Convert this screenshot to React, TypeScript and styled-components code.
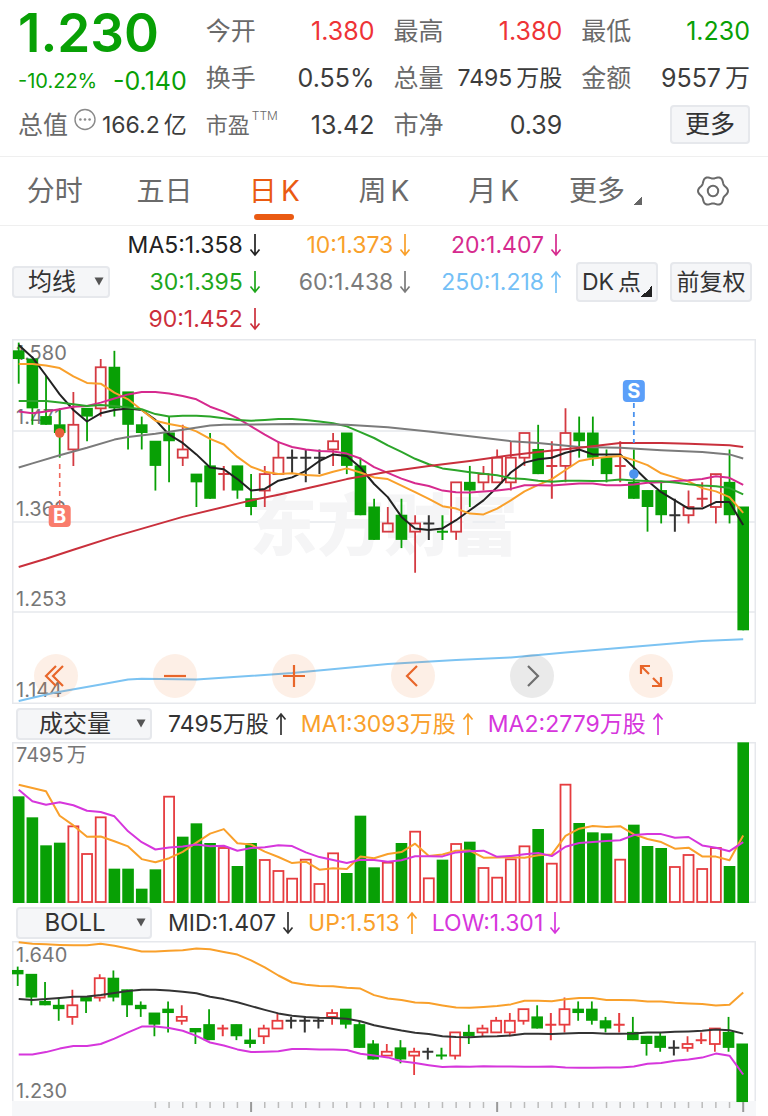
import React from 'react';
import styled, { createGlobalStyle } from 'styled-components';

const GREEN = '#08a005';
const RED = '#d43a42';
const ORANGE = '#f9a02b';
const MAGENTA = '#d62a8e';
const VIOLET = '#d636dc';
const ACCENT = '#ea5a12';

const Global = createGlobalStyle`
  * { box-sizing: border-box; }
  body {
    margin: 0;
    background: #fff;
    color: #333;
    font-family: Inter, "Noto Sans CJK SC", sans-serif;
  }
  button, select { font-family: inherit; color: inherit; margin: 0; }
`;

/* ---------- data ---------- */

type Candle = [open: number, close: number, high: number, low: number];

// Prices in cents.
const candles: Candle[] = [
  [157, 156, 158, 153], [156, 150, 156, 148], [149, 148, 154, 148], [148, 147, 150, 144],
  [145, 148, 152, 143], [150, 149, 150, 146], [150, 155, 156, 149], [155, 150, 157, 149],
  [152, 148, 152, 145], [148, 147, 149, 145], [146, 143, 146, 140], [147, 146, 149, 141],
  [144, 145, 148, 143], [142, 141, 142, 138], [143, 139, 147, 139], [142, 142, 143, 140],
  [143, 140, 143, 139], [139, 138, 142, 137], [140, 142, 143, 138], [142, 144, 146, 142],
  [144, 144, 145, 142], [144, 144, 145, 141], [144, 144, 145, 142], [145, 146, 147, 143],
  [147, 143, 147, 142], [143, 137, 144, 137], [138, 134, 139, 134], [135, 136, 138, 135],
  [137, 134, 139, 133], [135, 136, 137, 130], [136, 136, 137, 134], [135, 135, 137, 134],
  [135, 141, 141, 134], [141, 140, 143, 138], [141, 142, 143, 140], [141, 144, 145, 141],
  [141, 144, 146, 140], [144, 147, 147, 143], [145, 142, 148, 142], [143, 143, 146, 139],
  [143, 147, 150, 141], [147, 146, 149, 144], [147, 144, 149, 143], [144, 142, 145, 141],
  [143, 143, 146, 141], [141, 139, 145, 139], [140, 138, 140, 135], [140, 137, 141, 136],
  [137, 137, 139, 135], [137, 138, 140, 136], [139, 139, 141, 138], [138, 142, 142, 136],
  [141, 137, 145, 136], [138, 123, 138, 123],
];

// Volumes on a scale where 482 fills the chart (7495万).
const volumes = [
  320, 257, 173, 181, 233, 150, 260, 103, 103, 43, 101, 322, 199, 239, 180, 168, 111, 180,
  132, 99, 76, 133, 60, 152, 90, 262, 107, 124, 180, 217, 77, 130, 180, 184, 108, 79, 134,
  173, 222, 121, 358, 240, 212, 209, 133, 235, 171, 165, 111, 147, 105, 168, 111, 482,
];

const closes = candles.map((c) => c[1]);

// Moving average; the first entries reach back before the window and are given.
const average = (src: number[], n: number, head: number[]) =>
  src.map((_, i) =>
    i < n - 1 ? head[i] : src.slice(i - n + 1, i + 1).reduce((a, b) => a + b, 0) / n,
  );

const ma5 = average(closes, 5, [157.7, 156.2, 154, 151.7]);
const ma10 = average(closes, 10, [155.4, 155.4, 155.2, 154.9, 153.9, 153.1, 153, 151.9, 151.1]);
const ma20 = average(closes, 20, [
  149.6, 149.4, 149.6, 149.9, 150.2, 150.3, 150.7, 151.2, 151.7, 152, 152, 151.8, 151.5, 151.1,
  150.2, 149.6, 148.8, 147.8, 146.8,
]);
const ma30 = average(closes, 30, [
  150.9, 150.9, 150.9, 150.7, 150.5, 150.3, 150.4, 150.3, 150.1, 149.9, 149.3, 149, 149.1, 149.1,
  149, 148.8, 148.6, 148.5, 148.6, 148.7, 148.7, 148.6, 148.4, 148.2, 147.8, 147.1, 146.4, 145.5,
  144.7,
]);
const vol5 = average(volumes, 5, [355, 345, 335, 262]);
const vol10 = average(volumes, 10, [340, 305, 295, 302, 293, 277, 273, 260, 215]);

const upperHead = [
  164.3, 163.9, 163.8, 163.6, 163.5, 163.5, 163.9, 163.4, 162.7, 161.9, 161.9, 162.1, 162.2,
  162.7, 162.5, 161.8, 161.1, 159.6, 157.8,
];
const lowerHead = [
  135.3, 135.3, 135.9, 136.8, 137.5, 137.5, 138, 139.4, 141, 142.5, 142.5, 142.1, 141.4, 140.1,
  138.4, 137.6, 136.6, 135.9, 136,
];
const band = (i: number) => {
  const part = closes.slice(i - 19, i + 1);
  return 2 * Math.sqrt(part.reduce((a, c) => a + (c - ma20[i]) ** 2, 0) / 19);
};
const upper = closes.map((_, i) => (i < 19 ? upperHead[i] : ma20[i] + band(i)));
const lower = closes.map((_, i) => (i < 19 ? lowerHead[i] : ma20[i] - band(i)));

type Point = [index: number, value: number];
const ma60: Point[] = [
  [0, 142.8], [1, 143.3], [3, 144.3], [5, 145.2], [7, 146.2], [8, 146.5], [10, 146.9],
  [12, 147.4], [14, 147.9], [15, 148], [20, 148.1], [24, 148], [27, 147.7], [30, 147.2],
  [33, 146.6], [36, 146], [38, 145.8], [41, 145.3], [44, 145.2], [47, 144.9], [50, 144.7],
  [52, 144.4], [53, 143.9],
];
const ma90: Point[] = [
  [0, 130.7], [2, 131.7], [4, 132.8], [7, 134.4], [12, 136.8], [17, 138.8], [19, 139.5],
  [22, 140.6], [24, 141.4], [27, 142.3], [30, 143], [33, 143.6], [36, 144.3], [38, 144.7],
  [41, 145.2], [44, 145.8], [47, 145.8], [49, 145.7], [52, 145.5], [53, 145.3],
];
const ma250: Point[] = [
  [0, 114.4], [2.6, 115.4], [6, 116.4], [8, 117], [9, 117.1], [13, 117], [20, 117.8],
  [27, 118.9], [32, 119.4], [36, 119.7], [40, 120.3], [45, 121], [50, 121.7], [53, 121.9],
];

/* ---------- chart helpers ---------- */

const STEP = 13.67;
const px = (i: number) => 6.7 + STEP * i;
const priceY = (k: number) => 168 + (138 - k) * 8.22;
const bollY = (k: number) => 103 + (138 - k) * 3.87;
const volY = (v: number) => 161 - v / 3;

const indexed = (values: number[]): Point[] => values.map((v, i) => [i, v]);

function Line({ points, y, color }: { points: Point[]; y: (v: number) => number; color: string }) {
  return (
    <polyline
      points={points.map(([i, v]) => `${px(i).toFixed(1)},${y(v).toFixed(1)}`).join(' ')}
      fill="none"
      stroke={color}
      strokeWidth="2"
      strokeLinejoin="round"
    />
  );
}

function Candles({ y, shift = 0, red }: { y: (v: number) => number; shift?: number; red: string }) {
  return (
    <>
      {candles.map(([open, close, high, low], i) => {
        const x = px(i) + shift;
        const prev = i ? closes[i - 1] : 999;
        const top = y(Math.max(open, close));
        const bottom = y(Math.min(open, close));
        if (open === close) {
          const color = close > prev ? red : close < prev ? GREEN : '#333';
          return (
            <path
              key={i}
              d={`M${x} ${y(high)}V${y(low)}M${x - 5.5} ${top}h11`}
              stroke={color}
              strokeWidth="2"
            />
          );
        }
        if (close > open) {
          return (
            <g key={i} fill="none" stroke={red} strokeWidth="1.8">
              <path d={`M${x} ${y(high)}V${top}M${x} ${bottom}V${y(low)}`} />
              <rect x={x - 5} y={top} width="10" height={bottom - top} />
            </g>
          );
        }
        return (
          <g key={i} fill={GREEN}>
            <path d={`M${x} ${y(high)}V${y(low)}`} stroke={GREEN} strokeWidth="1.8" />
            <rect x={x - 5.8} y={top - 0.5} width="11.6" height={bottom - top + 0.5} />
          </g>
        );
      })}
    </>
  );
}

/* ---------- styled parts ---------- */

const Page = styled.main`
  width: 100%;
`;

const Quote = styled.section`
  display: grid;
  grid-template-columns: repeat(4, minmax(0, 1fr));
  column-gap: 19px;
  padding: 7px 18px 8px;
  border-bottom: 1px solid #efefef;
`;

const QuoteColumn = styled.div`
  display: grid;
  grid-template-rows: repeat(3, 47px);
`;

const QuoteRow = styled.div`
  display: flex;
  align-items: center;
  justify-content: space-between;
  white-space: nowrap;
`;

const PriceRow = styled(QuoteRow)`
  padding-top: 6px;
`;

const Price = styled.strong`
  font-size: 53px;
  line-height: 41px;
  font-weight: 600;
  color: ${GREEN};
`;

const Label = styled.span`
  font-size: 25px;
  line-height: 36px;
  color: #6a6a6a;
`;

const SmallLabel = styled(Label)`
  font-size: 22px;
`;

const Sup = styled.sup`
  font-size: 12px;
  line-height: 12px;
  vertical-align: 13px;
  margin-left: 2px;
  font-weight: 300;
`;

const Value = styled.span<{ $color?: string; $size?: number }>`
  font-size: ${(p) => p.$size ?? 25}px;
  line-height: 36px;
  color: ${(p) => p.$color ?? '#3c3c3c'};
`;

const Spaced = styled.span`
  margin-left: 4px;
`;

const Change = styled(QuoteRow)`
  padding-top: 6px;
`;

const MoreButton = styled.button`
  width: 80px;
  height: 39px;
  margin-left: auto;
  padding: 0;
  border: 2px solid #e6e8ec;
  border-radius: 4px;
  background: #f5f6f8;
  font-size: 25px;
  line-height: 33px;
`;

const Tabs = styled.nav`
  display: grid;
  grid-template-columns: repeat(7, minmax(0, 1fr));
  height: 69px;
  border-bottom: 1px solid #efefef;
`;

const Tab = styled.button<{ $active?: boolean }>`
  position: relative;
  display: flex;
  align-items: center;
  justify-content: center;
  padding: 0;
  border: 0;
  background: none;
  font-size: 28px;
  line-height: 40px;
  color: ${(p) => (p.$active ? ACCENT : '#6a6a6a')};
  white-space: nowrap;

  &::after {
    content: '';
    display: ${(p) => (p.$active ? 'block' : 'none')};
    position: absolute;
    bottom: 5px;
    width: 40px;
    height: 6px;
    border-radius: 3px;
    background: ${ACCENT};
  }
`;

const Corner = styled.i<{ $size: number; $color: string }>`
  width: ${(p) => p.$size}px;
  height: ${(p) => p.$size}px;
  align-self: flex-end;
  background: linear-gradient(135deg, transparent 50%, ${(p) => p.$color} 50%);
`;

const TabCorner = styled(Corner)`
  margin: 0 -4px 20px 8px;
`;

const Averages = styled.section`
  display: flex;
  align-items: center;
  padding: 0 16px 2px 12px;
`;

const Legend = styled.div`
  flex: 1;
  display: grid;
  grid-template-columns: repeat(3, minmax(0, 1fr));
  grid-auto-rows: 37px;
  align-items: center;
  justify-items: end;
`;

const Reading = styled.span<{ $color: string }>`
  display: inline-flex;
  align-items: center;
  gap: 6px;
  font-size: 23px;
  line-height: 32px;
  color: ${(p) => p.$color};
  white-space: nowrap;

  svg { flex: none; }
`;

const SelectBox = styled.div<{ $width: number }>`
  position: relative;
  flex: none;
  width: ${(p) => p.$width}px;
  height: 32px;

  svg {
    position: absolute;
    right: 6px;
    top: 11px;
    pointer-events: none;
  }
`;

const Select = styled.select`
  appearance: none;
  width: 100%;
  height: 100%;
  padding: 0 28px 0 10px;
  border: 2px solid #e6e8ec;
  border-radius: 4px;
  background: #f5f6f8;
  font-size: 24px;
  line-height: 28px;
  text-align: center;
  text-align-last: center;
`;

const SideButtons = styled.div`
  display: flex;
  gap: 12px;
  margin-left: 14px;
`;

const SideButton = styled.button`
  display: flex;
  align-items: center;
  justify-content: center;
  width: 82px;
  height: 40px;
  padding: 0;
  border: 2px solid #e6e8ec;
  border-radius: 4px;
  background: #f5f6f8;
  font-size: 23px;
  line-height: 34px;
  white-space: nowrap;
`;

const SideCorner = styled(Corner)`
  margin: 0 0 3px;
`;

const ChartArea = styled.section`
  position: relative;
  margin: 0 12px;

  > svg { display: block; width: 100%; height: auto; }
`;

const IndicatorBar = styled.div`
  display: flex;
  align-items: center;
  gap: 14px;
  height: 38px;
  padding: 2px 16px 0;
`;

const IndicatorSelect = styled(SelectBox)`
  margin-right: 2px;
`;

const Controls = styled.div`
  position: absolute;
  left: 22px;
  right: 83px;
  bottom: 6px;
  display: flex;
  justify-content: space-between;
`;

const RoundButton = styled.button<{ $muted?: boolean }>`
  width: 44px;
  height: 44px;
  padding: 0;
  border: 0;
  border-radius: 50%;
  background: ${(p) => (p.$muted ? 'rgba(90, 90, 90, 0.13)' : 'rgba(238, 110, 30, 0.11)')};
  color: ${(p) => (p.$muted ? '#6f6f6f' : '#e8662a')};

  svg { display: block; margin: 0 auto; }
`;

const AxisText = styled.text`
  font-family: Inter, "Noto Sans CJK SC", sans-serif;
  font-size: 20px;
  fill: #777;
`;

const Watermark = styled.text`
  font-family: "Noto Sans CJK SC", sans-serif;
  font-size: 67px;
  font-weight: 900;
  fill: #f5f5f6;
`;

const Badge = styled.text`
  font-family: Inter, sans-serif;
  font-size: 20px;
  font-weight: 700;
  fill: #fff;
  text-anchor: middle;
`;

/* ---------- icons ---------- */

const Arrow = ({ up }: { up?: boolean }) => (
  <svg width="12" height="24" viewBox="0 0 12 24" fill="none" stroke="currentColor" strokeWidth="1.7">
    <path d={up ? 'M6 23V2M1.5 7.5L6 2l4.5 5.5' : 'M6 1v21M1.5 16.5L6 22l4.5-5.5'} />
  </svg>
);

const Caret = () => (
  <svg width="10" height="9" viewBox="0 0 10 9">
    <path d="M0.5 0.5h9L5 8.5z" fill="#555" />
  </svg>
);

const gearPath =
  Array.from({ length: 72 }, (_, i) => {
    const a = (i * Math.PI) / 36;
    const r = 13.7 + 1.3 * Math.cos(6 * a);
    return `${i ? 'L' : 'M'}${(17 + r * Math.cos(a)).toFixed(2)} ${(17 + r * Math.sin(a)).toFixed(2)}`;
  }).join('') + 'Z';

const Gear = () => (
  <svg width="34" height="34" viewBox="0 0 34 34" fill="none" stroke="#6a6a6a" strokeWidth="2">
    <path d={gearPath} strokeLinejoin="round" />
    <circle cx="17" cy="17" r="5.2" />
  </svg>
);

const Dots = () => (
  <svg width="22" height="34" viewBox="0 0 22 34">
    <circle cx="11" cy="11.5" r="10" fill="none" stroke="#8a8a8a" strokeWidth="1.4" />
    <g fill="#8a8a8a">
      <circle cx="6.4" cy="11.5" r="1.3" />
      <circle cx="11" cy="11.5" r="1.3" />
      <circle cx="15.6" cy="11.5" r="1.3" />
    </g>
  </svg>
);

const controls: { name: string; d: string; muted?: boolean }[] = [
  { name: '最早', d: 'M22 12L12 22L22 32M29 12L19 22L29 32' },
  { name: '缩小', d: 'M11 22H33' },
  { name: '放大', d: 'M11 22H33M22 11V33' },
  { name: '向左', d: 'M26 12L16 22L26 32' },
  { name: '向右', d: 'M18 12L28 22L18 32', muted: true },
  { name: '全屏', d: 'M12 20V12H21M12 12L20 20M24 24L32 32M32 23V32H23' },
];

/* ---------- charts ---------- */

const Grid = ({ height, lines = [] }: { height: number; lines?: number[] }) => (
  <g fill="none" stroke="#e6e8ec" strokeWidth="1.5">
    <rect x="0.75" y="0.75" width="742.5" height={height - 1.5} />
    {lines.map((y) => (
      <path key={y} d={`M0 ${y}H744`} />
    ))}
  </g>
);

function PriceChart() {
  return (
    <svg viewBox="0 0 744 365">
      <Grid height={365} lines={[92, 183, 273]} />
      <Watermark x="238" y="211">东方财富</Watermark>
      <AxisText x="4" y="21">1.580</AxisText>
      <AxisText x="4" y="85">1.471</AxisText>
      <AxisText x="4" y="177">1.362</AxisText>
      <AxisText x="4" y="267">1.253</AxisText>
      <AxisText x="4" y="358">1.144</AxisText>
      <Candles y={priceY} red={RED} />
      <Line points={indexed(ma5)} y={priceY} color="#222" />
      <Line points={indexed(ma10)} y={priceY} color={ORANGE} />
      <Line points={indexed(ma20)} y={priceY} color={MAGENTA} />
      <Line points={indexed(ma30)} y={priceY} color="#2ca52a" />
      <Line points={ma60} y={priceY} color="#7b7b7b" />
      <Line points={ma250} y={priceY} color="#7cc3f2" />
      <Line points={ma90} y={priceY} color="#c9303c" />

      <circle cx={px(3)} cy="94" r="4.8" fill="#e8603c" />
      <path d={`M${px(3)} 125V166`} stroke="#f0685c" strokeWidth="1.6" strokeDasharray="5 4" />
      <rect x={px(3) - 11} y="166" width="22" height="22" rx="4" fill="#f97c6c" />
      <Badge x={px(3)} y="184">B</Badge>

      <circle cx={px(45)} cy="135" r="4.8" fill="#4b93ee" />
      <path d={`M${px(45)} 64V104`} stroke="#4b93ee" strokeWidth="1.8" strokeDasharray="5 4" />
      <rect x={px(45) - 11} y="41" width="22" height="22" rx="4" fill="#5b9ff9" />
      <Badge x={px(45)} y="59">S</Badge>
    </svg>
  );
}

function VolumeChart() {
  return (
    <svg viewBox="0 0 744 161">
      <Grid height={161} />
      <AxisText x="4" y="20">
        7495<tspan dx="3">万</tspan>
      </AxisText>
      {volumes.map((v, i) =>
        i > 0 && closes[i] >= closes[i - 1] ? (
          <rect
            key={i}
            x={px(i) - 5}
            y={volY(v) + 1}
            width="10"
            height={v / 3 - 2}
            fill="#fff"
            stroke="#e63c3f"
            strokeWidth="1.8"
          />
        ) : (
          <rect key={i} x={px(i) - 5.8} y={volY(v)} width="11.6" height={v / 3} fill={GREEN} />
        ),
      )}
      <Line points={indexed(vol5)} y={volY} color={ORANGE} />
      <Line points={indexed(vol10)} y={volY} color={VIOLET} />
    </svg>
  );
}

function BollChart() {
  return (
    <svg viewBox="0 0 744 175">
      <rect y="160" width="744" height="15" fill="#f6f7f9" />
      <path d="M0.75 160V0.75H743.25V160" fill="none" stroke="#e6e8ec" strokeWidth="1.5" />
      <AxisText x="4" y="21">1.640</AxisText>
      <AxisText x="4" y="157">1.230</AxisText>
      <Candles y={bollY} shift={-1} red="#e63c3f" />
      <Line points={indexed(upper)} y={bollY} color={ORANGE} />
      <Line points={indexed(ma20)} y={bollY} color="#333" />
      <Line points={indexed(lower)} y={bollY} color={VIOLET} />
      {candles.map((_, i) => {
        const major = i === 17 || i === 35 || i === 53;
        return i < 10 ? null : (
          <path
            key={i}
            d={`M${px(i)} 161v${major ? 10 : 6}`}
            stroke={major ? '#999' : '#bbb'}
            strokeWidth={major ? 2 : 1.5}
          />
        );
      })}
    </svg>
  );
}

/* ---------- page ---------- */

type Quoted = {
  label: string;
  value: string;
  unit?: string;
  color?: string;
  sup?: string;
  size?: number;
};

const columns: Quoted[][] = [
  [
    { label: '今开', value: '1.380', color: '#ee3336' },
    { label: '换手', value: '0.55%' },
    { label: '市盈', value: '13.42', sup: 'TTM' },
  ],
  [
    { label: '最高', value: '1.380', color: '#ee3336' },
    { label: '总量', value: '7495', unit: '万股', size: 23 },
    { label: '市净', value: '0.39' },
  ],
  [
    { label: '最低', value: '1.230', color: GREEN },
    { label: '金额', value: '9557', unit: '万' },
  ],
];

const legend = [
  { text: 'MA5:1.358', color: '#222' },
  { text: '10:1.373', color: ORANGE },
  { text: '20:1.407', color: MAGENTA },
  { text: '30:1.395', color: '#1ea61b' },
  { text: '60:1.438', color: '#7b7b7b' },
  { text: '250:1.218', color: '#74c0f6', up: true },
  { text: '90:1.452', color: '#cc2f3b' },
];

export default function App() {
  return (
    <Page>
      <Global />
      <Quote>
        <QuoteColumn>
          <PriceRow>
            <Price>1.230</Price>
          </PriceRow>
          <Change>
            <Value $color={GREEN} $size={20}>-10.22%</Value>
            <Value $color={GREEN} $size={25}>-0.140</Value>
          </Change>
          <QuoteRow>
            <Label>总值</Label>
            <Dots />
            <Value $size={23}>
              166.2<Spaced>亿</Spaced>
            </Value>
          </QuoteRow>
        </QuoteColumn>
        {columns.map((rows, c) => (
          <QuoteColumn key={c}>
            {rows.map((r) => (
              <QuoteRow key={r.label}>
                {r.sup ? (
                  <SmallLabel>
                    {r.label}
                    <Sup>{r.sup}</Sup>
                  </SmallLabel>
                ) : (
                  <Label>{r.label}</Label>
                )}
                <Value $color={r.color} $size={r.size}>
                  {r.value}
                  {r.unit && <Spaced>{r.unit}</Spaced>}
                </Value>
              </QuoteRow>
            ))}
            {c === 2 && (
              <QuoteRow>
                <MoreButton>更多</MoreButton>
              </QuoteRow>
            )}
          </QuoteColumn>
        ))}
      </Quote>

      <Tabs>
        <Tab>分时</Tab>
        <Tab>五日</Tab>
        <Tab $active>
          日<Spaced>K</Spaced>
        </Tab>
        <Tab>
          周<Spaced>K</Spaced>
        </Tab>
        <Tab>
          月<Spaced>K</Spaced>
        </Tab>
        <Tab>
          更多
          <TabCorner $size={9} $color="#666" />
        </Tab>
        <Tab aria-label="设置">
          <Gear />
        </Tab>
      </Tabs>

      <Averages>
        <SelectBox $width={98}>
          <Select aria-label="指标">
            <option>均线</option>
          </Select>
          <Caret />
        </SelectBox>
        <Legend>
          {legend.map((l) => (
            <Reading key={l.text} $color={l.color}>
              {l.text}
              <Arrow up={l.up} />
            </Reading>
          ))}
        </Legend>
        <SideButtons>
          <SideButton>
            DK<Spaced>点</Spaced>
            <SideCorner $size={11} $color="#222" />
          </SideButton>
          <SideButton>前复权</SideButton>
        </SideButtons>
      </Averages>

      <ChartArea>
        <PriceChart />
        <Controls>
          {controls.map((c) => (
            <RoundButton key={c.name} aria-label={c.name} $muted={c.muted}>
              <svg width="44" height="44" viewBox="0 0 44 44" fill="none" stroke="currentColor" strokeWidth="2.2">
                <path d={c.d} />
              </svg>
            </RoundButton>
          ))}
        </Controls>
      </ChartArea>

      <IndicatorBar>
        <IndicatorSelect $width={136}>
          <Select aria-label="副图一">
            <option>成交量</option>
          </Select>
          <Caret />
        </IndicatorSelect>
        <Reading $color="#333">7495万股<Arrow up /></Reading>
        <Reading $color={ORANGE}>MA1:3093万股<Arrow up /></Reading>
        <Reading $color={VIOLET}>MA2:2779万股<Arrow up /></Reading>
      </IndicatorBar>
      <ChartArea>
        <VolumeChart />
      </ChartArea>

      <IndicatorBar>
        <IndicatorSelect $width={136}>
          <Select aria-label="副图二">
            <option>BOLL</option>
          </Select>
          <Caret />
        </IndicatorSelect>
        <Reading $color="#333">MID:1.407<Arrow /></Reading>
        <Reading $color={ORANGE}>UP:1.513<Arrow up /></Reading>
        <Reading $color={VIOLET}>LOW:1.301<Arrow /></Reading>
      </IndicatorBar>
      <ChartArea>
        <BollChart />
      </ChartArea>
    </Page>
  );
}
